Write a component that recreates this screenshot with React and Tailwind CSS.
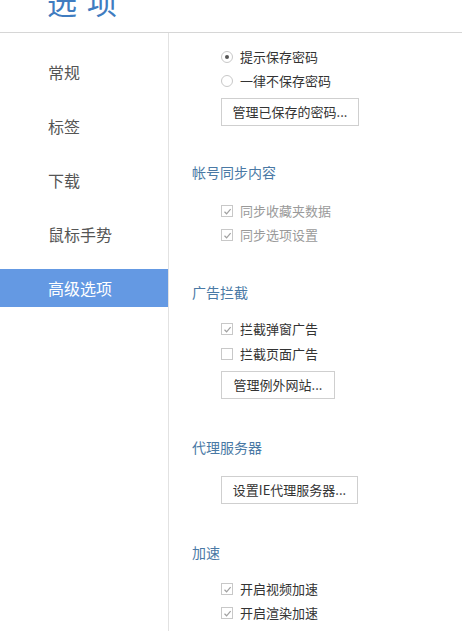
import React from "react";

const font = { fontFamily: '"Noto Sans CJK SC", "Noto Sans", sans-serif' };

const navItems = ["常规", "标签", "下载", "鼠标手势", "高级选项"];

function Radio({ checked, label }) {
  return (
    <div className="flex items-center h-[24px] text-[13px] text-[#333]">
      <span className="w-[12px] h-[12px] rounded-full border border-[#c8c8c8] flex items-center justify-center mr-[7px]">
        {checked && <span className="w-[4px] h-[4px] rounded-full bg-[#555]" />}
      </span>
      {label}
    </div>
  );
}

function Check({ checked, label, disabled }) {
  return (
    <div
      className={`flex items-center h-[24px] text-[13px] ${
        disabled ? "text-[#9a9a9a]" : "text-[#333]"
      }`}
    >
      <span className="w-[12px] h-[12px] border border-[#c8c8c8] flex items-center justify-center mr-[7px] bg-white">
        {checked && (
          <svg width="9" height="9" viewBox="0 0 9 9">
            <path d="M1.5 4.8 L3.6 6.8 L7.6 2.2" fill="none" stroke="#a0a0a0" strokeWidth="1.2" />
          </svg>
        )}
      </span>
      {label}
    </div>
  );
}

function Btn({ children, w }) {
  return (
    <button
      className={`${w} h-[28px] border border-[#cfcfcf] bg-white text-[13px] text-[#333] flex items-center justify-center`}
    >
      {children}
    </button>
  );
}

function Heading({ children, mt }) {
  return <div className={`${mt} h-[20px] leading-[20px] text-[14px] text-[#4a79a5]`}>{children}</div>;
}

export default function App() {
  return (
    <div className="w-[462px] h-[631px] overflow-hidden bg-white relative" style={font}>
      {/* Header */}
      <div className="h-[33px] border-b border-[#d6d6d6] overflow-hidden">
        <div className="mt-[-14px] ml-[47px] text-[30px] leading-[30px] tracking-[10px] text-[#3f7cc0]">
          选项
        </div>
      </div>

      <div className="flex h-[598px]">
        {/* Sidebar */}
        <div className="w-[169px] border-r border-[#e2e2e2] pt-[20px] shrink-0">
          {navItems.map((item, i) => (
            <div
              key={item}
              className={`h-[38px] mb-[16px] flex items-center pl-[48px] text-[16px] ${
                i === 4 ? "bg-[#6499e3] text-white" : "text-[#555]"
              }`}
            >
              {item}
            </div>
          ))}
        </div>

        {/* Content */}
        <div className="flex-1 pl-[23px] pt-[12px]">
          <div className="ml-[29px]">
            <Radio checked label="提示保存密码" />
            <Radio label="一律不保存密码" />
            <div className="mt-[5px]">
              <Btn w="w-[138px]">管理已保存的密码...</Btn>
            </div>
          </div>

          <Heading mt="mt-[36px]">帐号同步内容</Heading>
          <div className="ml-[29px] mt-[17px]">
            <Check checked disabled label="同步收藏夹数据" />
            <Check checked disabled label="同步选项设置" />
          </div>

          <Heading mt="mt-[35px]">广告拦截</Heading>
          <div className="ml-[29px] mt-[15px]">
            <Check checked label="拦截弹窗广告" />
            <div className="h-px" />
            <Check label="拦截页面广告" />
            <div className="mt-[5px]">
              <Btn w="w-[114px]">管理例外网站...</Btn>
            </div>
          </div>

          <Heading mt="mt-[38px]">代理服务器</Heading>
          <div className="ml-[29px] mt-[19px]">
            <Btn w="w-[137px]">设置IE代理服务器...</Btn>
          </div>

          <Heading mt="mt-[38px]">加速</Heading>
          <div className="ml-[29px] mt-[15px]">
            <Check checked label="开启视频加速" />
            <Check checked label="开启渲染加速" />
          </div>
        </div>
      </div>
    </div>
  );
}
